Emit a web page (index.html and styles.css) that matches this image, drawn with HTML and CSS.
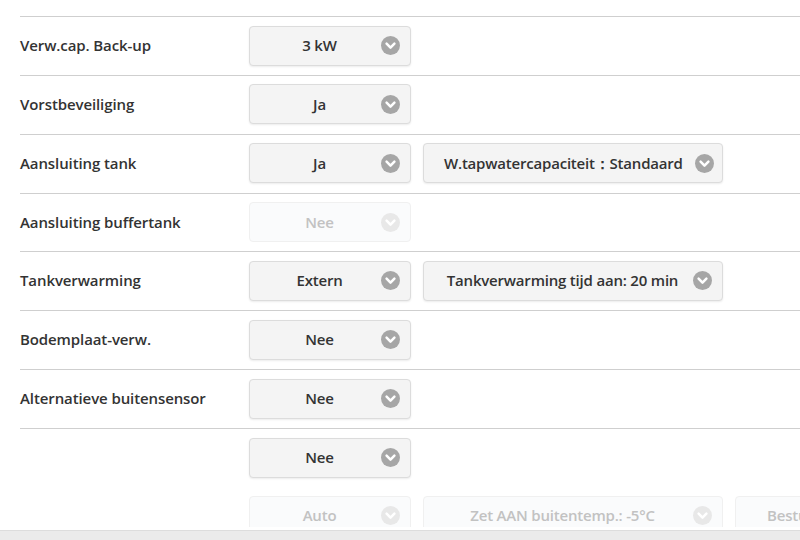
FILE: index.html
```html
<!DOCTYPE html>
<html lang="nl">
<head>
<meta charset="utf-8">
<title>Instellingen</title>
<link rel="stylesheet" href="styles.css">
</head>
<body>
<div class="viewport">
  <div class="rows">
    <div class="row">
      <div class="label">Verw.cap. Back-up</div>
      <div class="controls">
        <div class="select"><span class="val">3 kW</span><svg class="chev" viewBox="0 0 18 18"><circle cx="9" cy="9" r="9"/><path d="M5.3 7.3 L9 11 L12.7 7.3"/></svg></div>
      </div>
    </div>
    <div class="row">
      <div class="label">Vorstbeveiliging</div>
      <div class="controls">
        <div class="select"><span class="val">Ja</span><svg class="chev" viewBox="0 0 18 18"><circle cx="9" cy="9" r="9"/><path d="M5.3 7.3 L9 11 L12.7 7.3"/></svg></div>
      </div>
    </div>
    <div class="row">
      <div class="label">Aansluiting tank</div>
      <div class="controls">
        <div class="select"><span class="val">Ja</span><svg class="chev" viewBox="0 0 18 18"><circle cx="9" cy="9" r="9"/><path d="M5.3 7.3 L9 11 L12.7 7.3"/></svg></div>
        <div class="select wide"><span class="val">W.tapwatercapaciteit：Standaard</span><svg class="chev" viewBox="0 0 18 18"><circle cx="9" cy="9" r="9"/><path d="M5.3 7.3 L9 11 L12.7 7.3"/></svg></div>
      </div>
    </div>
    <div class="row">
      <div class="label">Aansluiting buffertank</div>
      <div class="controls">
        <div class="select disabled"><span class="val">Nee</span><svg class="chev" viewBox="0 0 18 18"><circle cx="9" cy="9" r="9"/><path d="M5.3 7.3 L9 11 L12.7 7.3"/></svg></div>
      </div>
    </div>
    <div class="row">
      <div class="label">Tankverwarming</div>
      <div class="controls">
        <div class="select"><span class="val">Extern</span><svg class="chev" viewBox="0 0 18 18"><circle cx="9" cy="9" r="9"/><path d="M5.3 7.3 L9 11 L12.7 7.3"/></svg></div>
        <div class="select wide"><span class="val">Tankverwarming tijd aan: 20 min</span><svg class="chev" viewBox="0 0 18 18"><circle cx="9" cy="9" r="9"/><path d="M5.3 7.3 L9 11 L12.7 7.3"/></svg></div>
      </div>
    </div>
    <div class="row">
      <div class="label">Bodemplaat-verw.</div>
      <div class="controls">
        <div class="select"><span class="val">Nee</span><svg class="chev" viewBox="0 0 18 18"><circle cx="9" cy="9" r="9"/><path d="M5.3 7.3 L9 11 L12.7 7.3"/></svg></div>
      </div>
    </div>
    <div class="row">
      <div class="label">Alternatieve buitensensor</div>
      <div class="controls">
        <div class="select"><span class="val">Nee</span><svg class="chev" viewBox="0 0 18 18"><circle cx="9" cy="9" r="9"/><path d="M5.3 7.3 L9 11 L12.7 7.3"/></svg></div>
      </div>
    </div>
    <div class="row last">
      <div class="label"></div>
      <div class="stack">
        <div class="controls">
          <div class="select"><span class="val">Nee</span><svg class="chev" viewBox="0 0 18 18"><circle cx="9" cy="9" r="9"/><path d="M5.3 7.3 L9 11 L12.7 7.3"/></svg></div>
        </div>
        <div class="controls">
          <div class="select disabled"><span class="val">Auto</span><svg class="chev" viewBox="0 0 18 18"><circle cx="9" cy="9" r="9"/><path d="M5.3 7.3 L9 11 L12.7 7.3"/></svg></div>
          <div class="select wide disabled"><span class="val">Zet AAN buitentemp.: -5°C</span><svg class="chev" viewBox="0 0 18 18"><circle cx="9" cy="9" r="9"/><path d="M5.3 7.3 L9 11 L12.7 7.3"/></svg></div>
          <div class="select wide disabled"><span class="val">Besturing: Ruimtethermostaat</span><svg class="chev" viewBox="0 0 18 18"><circle cx="9" cy="9" r="9"/><path d="M5.3 7.3 L9 11 L12.7 7.3"/></svg></div>
        </div>
      </div>
    </div>
  </div>
</div>
<div class="hscroll"></div>
</body>
</html>
```

FILE: styles.css
```css
html, body {
  margin: 0;
  padding: 0;
  background: #ffffff;
}

body {
  font-family: "Open Sans", "Liberation Sans", sans-serif;
  font-size: 15px;
  color: #333333;
  width: 800px;
  height: 540px;
  overflow: hidden;
}

.viewport {
  height: 527px;
  overflow: hidden;
  padding: 16px 0 0 20px;
  box-sizing: border-box;
}

.rows {
  border-top: 1px solid #cfcfcf;
  width: 1200px;
}

.row {
  display: flex;
  align-items: center;
  padding: 8.5px 0 9.36px;
  border-bottom: 1px solid #cfcfcf;
}

.row.last {
  border-bottom: none;
  align-items: flex-start;
}

.label {
  width: 229px;
  flex: none;
  font-weight: 600;
  letter-spacing: -0.1px;
  line-height: 20px;
  margin-top: -1px;
}

.stack {
  display: flex;
  flex-direction: column;
  gap: 18px;
}

.controls {
  display: flex;
  gap: 12px;
  flex-wrap: nowrap;
}

.select {
  width: 162px;
  height: 40px;
  flex: none;
  box-sizing: border-box;
  display: flex;
  align-items: center;
  padding: 0 10px 0 20px;
  background: #f4f4f4;
  border: 1px solid #dcdcdc;
  border-radius: 4px;
  box-shadow: 0 1px 2px rgba(0, 0, 0, 0.08);
}

.select.wide {
  width: 300px;
}

.val {
  flex: 1;
  text-align: center;
  margin-right: 12px;
  white-space: nowrap;
  font-weight: 600;
  letter-spacing: -0.2px;
  line-height: 20px;
  margin-top: -1px;
}

.chev {
  width: 19px;
  height: 19px;
  flex: none;
}

.chev circle {
  fill: #a6a6a6;
}

.chev path {
  fill: none;
  stroke: #ffffff;
  stroke-width: 2.4;
  stroke-linecap: round;
  stroke-linejoin: round;
}

.select.disabled {
  background: #fafbfc;
  border-color: #f0f0f0;
  box-shadow: none;
}

.select.disabled .val {
  color: #c2c2c2;
}

.select.disabled .chev circle {
  fill: #e8e8e8;
}

.hscroll {
  height: 10px;
  margin-top: 3px;
  background: #ebebeb;
  border-top: 1px solid #dddddd;
  box-sizing: border-box;
}
```
